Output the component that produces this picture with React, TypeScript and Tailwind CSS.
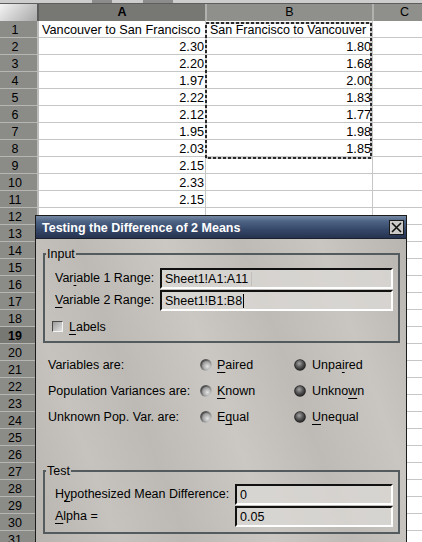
import React from 'react';

const A: Record<number, string> = {
  2: '2.30', 3: '2.20', 4: '1.97', 5: '2.22', 6: '2.12', 7: '1.95', 8: '2.03', 9: '2.15', 10: '2.33', 11: '2.15',
};
const B: Record<number, string> = {
  2: '1.80', 3: '1.68', 4: '2.00', 5: '1.83', 6: '1.77', 7: '1.98', 8: '1.85',
};

function U({ children }: { children: React.ReactNode }) {
  return <span className="underline underline-offset-[3px] decoration-1">{children}</span>;
}

function Radio({ on, id }: { on: boolean; id: string }) {
  if (on) {
    return (
      <svg width="12" height="12" viewBox="0 0 12 12" className="shrink-0">
        <defs>
          <radialGradient id={id} cx="0.42" cy="0.35" r="0.65">
            <stop offset="0" stopColor="#a4a4a4" />
            <stop offset="0.55" stopColor="#5a5a5a" />
            <stop offset="1" stopColor="#2c2c2c" />
          </radialGradient>
        </defs>
        <circle cx="6" cy="6" r="5.8" fill="#222" />
        <circle cx="6" cy="6" r="4.9" fill={`url(#${id})`} />
      </svg>
    );
  }
  return (
    <svg width="12" height="12" viewBox="0 0 12 12" className="shrink-0">
      <defs>
        <linearGradient id={id + 'o'} x1="0" y1="0" x2="1" y2="1">
          <stop offset="0" stopColor="#2a2a2a" />
          <stop offset="0.5" stopColor="#7e7e7e" />
          <stop offset="1" stopColor="#eeeeee" />
        </linearGradient>
        <radialGradient id={id + 'i'} cx="0.62" cy="0.62" r="0.6">
          <stop offset="0" stopColor="#e4e4e4" />
          <stop offset="1" stopColor="#989898" />
        </radialGradient>
      </defs>
      <circle cx="6" cy="6" r="5.9" fill={`url(#${id}o)`} />
      <circle cx="6.4" cy="6.4" r="4.3" fill={`url(#${id}i)`} />
    </svg>
  );
}

function InputBox({ value, cursor, ghost }: { value: string; cursor?: boolean; ghost?: boolean }) {
  return (
    <div className="flex-1 h-[21px] border-2 border-t-[#111] border-l-[#111] border-r-white border-b-white bg-[#d9d7d3]/85 flex items-center pl-[3px]">
      <span className="leading-[14px]">{value}</span>
      {cursor && <span className="w-[1px] h-[14px] bg-black ml-[1px]" />}
      {ghost && <span className="w-[1px] h-[14px] bg-[#c2c0bc] ml-[3px]" />}
    </div>
  );
}

export default function App() {
  const rows = Array.from({ length: 32 }, (_, i) => i + 1);
  return (
    <div className="relative w-[422px] h-[542px] overflow-hidden bg-white text-black font-['Liberation_Sans',Arial,sans-serif] text-[12.5px]">
      {/* top strip */}
      <div className="h-[4px] flex bg-[#cdcdcd] border-b border-[#5e5e5e]">
        <div className="w-[92px]" />
        <div className="w-[20px] bg-[#8c8c8c]" />
        <div className="w-[31px]" />
        <div className="w-[30px] bg-[#8c8c8c]" />
      </div>
      {/* column header */}
      <div className="flex h-[17px]">
        <div className="w-[37px] bg-[linear-gradient(135deg,#f4f4f4,#c6c6c6_60%,#a8a8a8)]" />
        <div className="w-[2px] bg-[#5a5a5a]" />
        <div className="w-[166px] bg-[#777874] font-bold flex items-center justify-center">A</div>
        <div className="w-[2px] bg-[#b1b1af]" />
        <div className="w-[165px] bg-[#8f908c] flex items-center justify-center">B</div>
        <div className="w-[2px] bg-[#b1b1af]" />
        <div className="flex-1 bg-[#8f908c] flex items-center pl-[26px]">C</div>
      </div>
      {/* rows */}
      {rows.map((n) => (
        <div key={n} className="flex h-[17px]">
          <div
            className={
              n === 19
                ? 'w-[37px] bg-[#777874] border-b border-[#b6b6b4] font-bold flex justify-center pr-[7px] pt-[3px] leading-[13px]'
                : 'w-[37px] bg-[#8b8c88] border-b border-[#b6b6b4] flex justify-center pr-[7px] pt-[3px] leading-[13px]'
            }
          >
            {n}
          </div>
          <div className="w-[2px] bg-[#bdbdbb]" />
          <div
            className={
              n === 1
                ? 'w-[167px] border-r border-b border-[#c6c6c6] pl-[3px] pt-[3px] leading-[13px] text-[12.7px] whitespace-nowrap'
                : 'w-[167px] border-r border-b border-[#c6c6c6] pr-[1px] pt-[3px] leading-[13px] text-[12.7px] text-right'
            }
          >
            {n === 1 ? 'Vancouver to San Francisco' : A[n] ?? ''}
          </div>
          <div
            className={
              n === 1
                ? 'w-[167px] border-r border-b border-[#c6c6c6] pl-[4px] pt-[3px] leading-[13px] text-[12.5px] whitespace-nowrap'
                : 'w-[167px] border-r border-b border-[#c6c6c6] pr-[1px] pt-[3px] leading-[13px] text-[12.7px] text-right'
            }
          >
            {n === 1 ? 'San Francisco to Vancouver' : B[n] ?? ''}
          </div>
          <div className="flex-1 border-b border-[#c6c6c6]" />
        </div>
      ))}

      {/* marching ants selection */}
      <svg className="absolute left-[205px] top-[22px]" width="167" height="138" viewBox="0 0 167 138">
        <rect x="1" y="1" width="165" height="135" fill="none" stroke="#c8c8c8" strokeWidth="2" />
        <rect x="1" y="1" width="165" height="135" fill="none" stroke="#2a2a2a" strokeWidth="2" strokeDasharray="3 2" />
      </svg>

      {/* dialog */}
      <div className="absolute left-[35px] top-[215px] w-[372px] h-[340px] border border-[#1b1b1b] flex flex-col">
        <div className="h-[23px] shrink-0 flex items-center justify-between pl-[6px] pr-[2px] border-b border-[#1a202c] bg-[linear-gradient(180deg,#7588a3_0%,#4d6384_25%,#36496b_60%,#263350_100%)]">
          <span className="text-white font-bold text-[12.5px] leading-[14px] pt-[1px]">Testing the Difference of 2 Means</span>
          <div className="w-[15px] h-[15px] bg-[#cbcac8] border border-[#1a1a1a] flex items-center justify-center">
            <svg width="13" height="13" viewBox="0 0 13 13">
              <path d="M2 2 L11 11 M11 2 L2 11" stroke="#111" strokeWidth="1.6" />
            </svg>
          </div>
        </div>
        <div className="flex-1 pt-[8px] bg-[linear-gradient(70deg,#b7b4af_0%,#c6c3be_18%,#bdbab5_32%,#cbc8c3_50%,#bebbb6_66%,#c9c6c1_82%,#b8b5b0_100%)]">
          <fieldset className="ml-[7px] mr-[6px] border-2 border-[#535b5e]">
            <legend className="ml-[1px] px-[1px] leading-[14px]">Input</legend>
            <div className="pl-[10px] pr-[5px] pt-[7px] pb-[9px]">
              <div className="flex items-center h-[21px]">
                <div className="w-[105px]">Var<U>i</U>able 1 Range:</div>
                <InputBox value="Sheet1!A1:A11" ghost />
              </div>
              <div className="flex items-center h-[21px] mt-[1px]">
                <div className="w-[105px]"><U>V</U>ariable 2 Range:</div>
                <InputBox value="Sheet1!B1:B8" cursor />
              </div>
              <div className="flex items-center h-[11px] mt-[10px] ml-[-3px]">
                <div className="w-[11px] h-[11px] border border-t-[#4a4a4a] border-l-[#4a4a4a] border-r-[#f4f4f4] border-b-[#f4f4f4] bg-[linear-gradient(135deg,#9c9c9c,#e2e2e2)]" />
                <span className="ml-[6px] leading-[14px]"><U>L</U>abels</span>
              </div>
            </div>
          </fieldset>

          <div className="mt-[9px] pl-[12px]">
            <div className="flex items-center h-[26px]">
              <div className="w-[152px]">Variables are:</div>
              <div className="w-[94px] flex items-center gap-[5px]"><Radio on={false} id="r1" /><span><U>P</U>aired</span></div>
              <div className="flex items-center gap-[6px]"><Radio on id="r2" /><span>Unpa<U>i</U>red</span></div>
            </div>
            <div className="flex items-center h-[26px]">
              <div className="w-[152px]">Population Variances are:</div>
              <div className="w-[94px] flex items-center gap-[5px]"><Radio on={false} id="r3" /><span><U>K</U>nown</span></div>
              <div className="flex items-center gap-[6px]"><Radio on id="r4" /><span>Unkno<U>w</U>n</span></div>
            </div>
            <div className="flex items-center h-[26px]">
              <div className="w-[152px]">Unknown Pop. Var. are:</div>
              <div className="w-[94px] flex items-center gap-[5px]"><Radio on={false} id="r5" /><span>E<U>q</U>ual</span></div>
              <div className="flex items-center gap-[6px]"><Radio on id="r6" /><span><U>U</U>nequal</span></div>
            </div>
          </div>

          <fieldset className="mt-[34px] ml-[7px] mr-[6px] border-2 border-[#535b5e]">
            <legend className="ml-[1px] px-[1px] leading-[14px]">Test</legend>
            <div className="pl-[10px] pr-[5px] pt-[6px] pb-[5px]">
              <div className="flex items-center h-[21px]">
                <div className="w-[180px] whitespace-nowrap">H<U>y</U>pothesized Mean Difference:</div>
                <InputBox value="0" />
              </div>
              <div className="flex items-center h-[21px] mt-[1px]">
                <div className="w-[180px]"><U>A</U>lpha =</div>
                <InputBox value="0.05" />
              </div>
            </div>
          </fieldset>
        </div>
      </div>
    </div>
  );
}
